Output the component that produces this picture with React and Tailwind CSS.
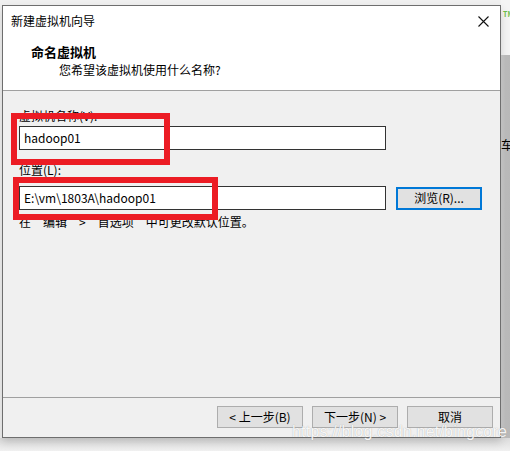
import React from "react";

const F = { fontFamily: '"Microsoft YaHei", "Noto Sans CJK SC", "Noto Sans", sans-serif' };

export default function App() {
  return (
    <div className="relative w-[510px] h-[451px] overflow-hidden bg-[#f0f0f0] text-[12px] text-black" style={F}>
      {/* desktop behind: right strip */}
      <div className="absolute left-[501px] top-0 w-[9px] h-[55px] bg-[#f4f4f4]">
        <span className="absolute left-[2px] top-[10px] text-[7px] leading-[8px] text-[#6cbf4a] font-bold">TM</span>
      </div>
      <div className="absolute left-[501px] top-[55px] w-[9px] h-[383px] bg-gradient-to-r from-[#cfcfcf] via-[#bdbdbd] to-[#b8b8b8]">
        <span className="absolute left-[0px] top-[82px] text-[12px] leading-[16px] text-black">车</span>
      </div>
      <div className="absolute left-0 top-[438px] w-[510px] h-[13px] bg-gradient-to-b from-[#dcdcdc] to-[#f0f0f0]" />

      {/* window */}
      <div className="relative ml-[2px] mt-[5px] w-[499px] h-[433px] border border-[#6e6e6e] bg-[#f0f0f0] flex flex-col shadow-[0_4px_8px_rgba(0,0,0,0.15)]">
        {/* white header */}
        <div className="h-[84px] bg-white flex flex-col">
          <div className="h-[30px] flex items-center justify-between pl-[8px] pr-[11px]">
            <span className="leading-[16px]">新建虚拟机向导</span>
            <svg width="11" height="11" viewBox="0 0 11 11" className="mt-[1px]">
              <path d="M0.5 0.5 L10.5 10.5 M10.5 0.5 L0.5 10.5" stroke="#111" strokeWidth="1.1" fill="none" />
            </svg>
          </div>
          <div className="pl-[28px] mt-[7px] text-[13px] font-bold leading-[18px]">命名虚拟机</div>
          <div className="pl-[56px] leading-[18px]">您希望该虚拟机使用什么名称?</div>
        </div>
        <div className="h-px bg-[#a0a0a0]" />

        {/* body */}
        <div className="flex-1 flex flex-col pl-[16px] pt-[17px]">
          <div className="leading-[16px]">虚拟机名称(V):</div>
          <div className="mt-[2px] w-[367px] h-[24px] border border-[#333] bg-white flex items-center pl-[4px] text-[12px]">hadoop01</div>
          <div className="mt-[12px] leading-[16px]">位置(L):</div>
          <div className="mt-[8px] flex items-center">
            <div className="w-[367px] h-[24px] border border-[#333] bg-white flex items-center pl-[4px]">E:\vm\1803A\hadoop01</div>
            <div className="ml-[10px] w-[86px] h-[23px] border-2 border-[#0078d7] bg-[#e1e1e1] flex items-center justify-center">浏览(R)...</div>
          </div>
          <div className="mt-[4px] leading-[16px]">在“编辑”&gt;“首选项”中可更改默认位置。</div>
        </div>

        <div className="h-px bg-[#a0a0a0]" />
        <div className="h-[39px] flex items-center justify-end gap-[9px] pr-[7px] pb-[2px]">
          <div className="w-[86px] h-[22px] border border-[#adadad] bg-[#e1e1e1] flex items-center justify-center">&lt; 上一步(B)</div>
          <div className="w-[86px] h-[22px] border border-[#adadad] bg-[#e1e1e1] flex items-center justify-center">下一步(N) &gt;</div>
          <div className="w-[86px] h-[22px] border border-[#adadad] bg-[#e1e1e1] flex items-center justify-center">取消</div>
        </div>
      </div>

      {/* red annotation boxes */}
      <div className="absolute left-[11px] top-[113px] w-[159px] h-[52px] border-[6px] border-[#ec1c24]" />
      <div className="absolute left-[13px] top-[177px] w-[205px] h-[43px] border-[6px] border-[#ec1c24]" />

      {/* watermark */}
      <div
        className="absolute left-[292px] top-[422px] text-[16px] leading-[20px] text-white/90 tracking-[0.2px]"
        style={{ fontFamily: '"Liberation Sans", Arial, sans-serif', textShadow: "0 0 1px rgba(110,110,110,0.6)" }}
      >
        https://blog.csdn.net/bingcore
      </div>
    </div>
  );
}
